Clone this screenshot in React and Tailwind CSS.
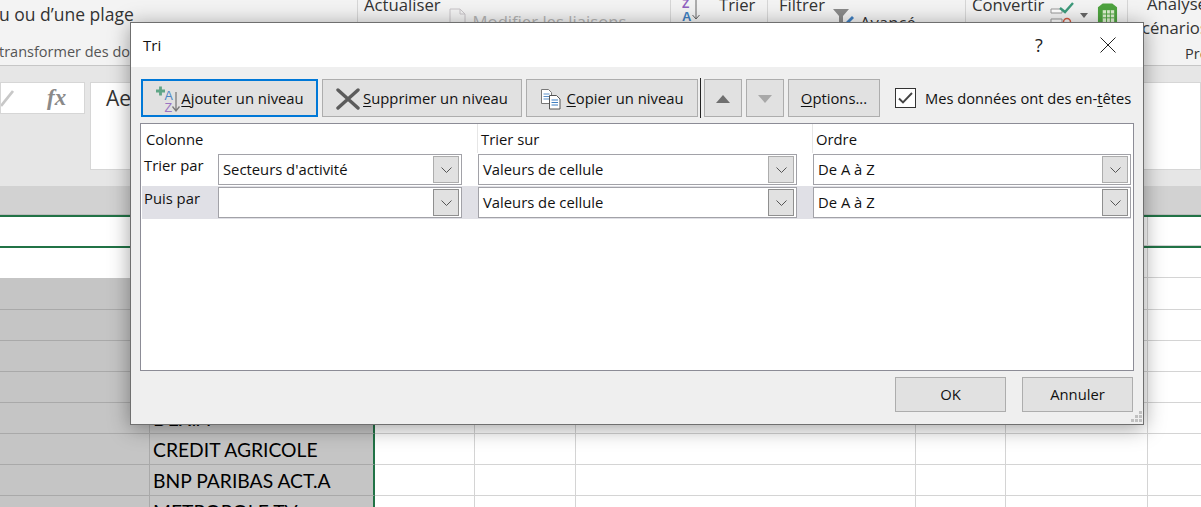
const rows = [
  { cls: "h-[31px] border-t-2 border-t-[#217346]", sel: false, text: "" },
  { cls: "h-[32px] border-t-2 border-t-[#217346]", sel: false, text: "" },
  { cls: "h-[32px]", sel: true, text: "" },
  { cls: "h-[31px]", sel: true, text: "" },
  { cls: "h-[31px]", sel: true, text: "" },
  { cls: "h-[31px]", sel: true, text: "" },
  { cls: "h-[31px]", sel: true, text: "DEXIA" },
  { cls: "h-[31px]", sel: true, text: "CREDIT AGRICOLE" },
  { cls: "h-[31px]", sel: true, text: "BNP PARIBAS ACT.A" },
  { cls: "h-[31px]", sel: true, text: "METROPOLE TV" },
];

function SheetRow({ row }) {
  const sel = row.sel ? "bg-[#c5c5c5] border-[#a9a9a9]" : "bg-white border-[#fff]";
  return (
    <div className={`flex ${row.cls} box-border`}>
      <div className={`w-[150px] shrink-0 border-r border-b ${sel}`} />
      <div className={`w-[225px] shrink-0 border-r-2 border-r-[#217346] border-b pl-[3px] text-[19.300px] leading-[32px] text-black font-['Lato',sans-serif] ${sel}`}>
        {row.text}
      </div>
      {[100, 101, 340, 90, 142].map((w, i) => (
        <div key={i} style={{ width: w }} className="shrink-0 bg-white border-r border-b border-[#d4d4d4]" />
      ))}
      <div className="flex-1 bg-white border-b border-[#d4d4d4]" />
    </div>
  );
}

function SortAddIcon() {
  return (
    <svg width="26" height="28" viewBox="0 0 26 28" className="shrink-0">
      <path d="M1 6h9M5.500 1.500v9" stroke="#5fa586" strokeWidth="2.800" />
      <text x="9.500" y="15" fontSize="12.500" fill="#4a86c5" fontFamily="Liberation Sans">A</text>
      <text x="9.500" y="27" fontSize="12.500" fill="#9a74c2" fontFamily="Liberation Sans">Z</text>
      <path d="M21 7v19M17.500 21.500l3.500 4.500 3.500-4.500" stroke="#7a7a7a" strokeWidth="1.300" fill="none" />
    </svg>
  );
}

function DeleteIcon() {
  return (
    <svg width="24" height="22" viewBox="0 0 24 22" className="shrink-0">
      <path d="M2 2l20 18M22 2L2 20" stroke="#5c5c5c" strokeWidth="3.400" strokeLinecap="round" />
    </svg>
  );
}

function CopyIcon() {
  return (
    <svg width="22" height="22" viewBox="0 0 22 22" className="shrink-0">
      <path d="M1.500 1.500h7l3 3v11h-10z" fill="#fff" stroke="#777" />
      <path d="M3.500 6h6M3.500 8.500h6M3.500 11h6" stroke="#5b8fc7" />
      <path d="M9.500 7.500h7l3.500 3.500v10h-10.500z" fill="#fff" stroke="#555" />
      <path d="M11.500 12h6.500M11.500 14.500h6.500M11.500 17h6.500" stroke="#3f7fc1" />
    </svg>
  );
}

function DialogButton({ className = "", children }) {
  return (
    <button className={`box-border flex items-center justify-center bg-[#e1e1e1] text-[14.800px] text-[#111] shrink-0 ${className}`}>
      {children}
    </button>
  );
}

function Chevron({ strong }) {
  return (
    <div className={`w-[26px] h-[27px] flex items-center justify-center bg-[#e1e1e1] border ${strong ? "border-[#8f8f8f]" : "border-[#adadad]"}`}>
      <svg width="11" height="6" viewBox="0 0 11 6">
        <path d="M0.500 0.500l5 5 5-5" stroke="#555" fill="none" />
      </svg>
    </div>
  );
}

function SelectBox({ className = "", value, strong }) {
  return (
    <div className={`h-[31px] box-border bg-white border border-[#a2a2a8] flex items-center justify-between pl-[4px] pr-[2px] text-[14.800px] text-[#111] ${className}`}>
      <span>{value}</span>
      <Chevron strong={strong} />
    </div>
  );
}

function LevelRow({ label, value, shaded }) {
  return (
    <div className={`flex h-[33px] items-center ${shaded ? "bg-[#e0e0e6]" : ""}`}>
      <div className="w-[76px] shrink-0 pl-[2px] pb-[8px] text-[14.800px] text-[#111]">{label}</div>
      <SelectBox className="w-[244px]" value={value} strong={shaded} />
      <div className="w-[16px] shrink-0" />
      <SelectBox className="w-[319px]" value="Valeurs de cellule" strong={shaded} />
      <div className="w-[16px] shrink-0" />
      <SelectBox className="w-[318px]" value="De A à Z" strong={shaded} />
    </div>
  );
}

function SortDialog() {
  const toolBtn = "h-[38px] pt-px border border-[#adadad]";
  const mark = "underline underline-offset-2";
  return (
    <div className="absolute left-[130px] top-[22px] w-[1014px] h-[403px] box-border flex flex-col bg-[#efefef] border border-[#6f6f6f] shadow-[0_3px_20px_rgba(0,0,0,0.38)] font-['Open_Sans',sans-serif]">
      {/* Title bar */}
      <div className="h-[44px] shrink-0 bg-white flex items-center pl-[12px]">
        <span className="text-[15px] text-[#111]">Tri</span>
        <span className="ml-auto w-[20px] text-[18px] text-center text-[#222]">?</span>
        <svg width="16" height="16" viewBox="0 0 16 16" className="ml-[51px] mr-[27px]">
          <path d="M0.500 0.500l15 15M15.500 0.500l-15 15" stroke="#222" />
        </svg>
      </div>

      {/* Toolbar */}
      <div className="flex items-start pl-[10px] pt-[12px] h-[56px] shrink-0">
        <DialogButton className="w-[177px] h-[38px] pt-px border-2 border-[#0078d7]">
          <SortAddIcon />
          <span><span className={mark}>A</span>jouter un niveau</span>
        </DialogButton>
        <DialogButton className={`w-[200px] ml-[4px] gap-[3px] ${toolBtn}`}>
          <DeleteIcon />
          <span><span className={mark}>S</span>upprimer un niveau</span>
        </DialogButton>
        <DialogButton className={`w-[172px] ml-[4px] gap-[4px] ${toolBtn}`}>
          <CopyIcon />
          <span><span className={mark}>C</span>opier un niveau</span>
        </DialogButton>
        <div className="w-px h-[40px] -mt-px bg-[#222] ml-[2px] mr-[3px] shrink-0" />
        <DialogButton className={`w-[38px] ${toolBtn}`}>
          <svg width="14" height="8" viewBox="0 0 14 8"><path d="M7 0l7 8H0z" fill="#6f6f6f" /></svg>
        </DialogButton>
        <DialogButton className={`w-[38px] ml-[4px] ${toolBtn}`}>
          <svg width="14" height="8" viewBox="0 0 14 8"><path d="M0 0h14L7 8z" fill="#a8a8a8" /></svg>
        </DialogButton>
        <DialogButton className={`w-[92px] ml-[4px] ${toolBtn}`}>
          <span><span className={mark}>O</span>ptions...</span>
        </DialogButton>
        <div className="w-[21px] h-[20px] box-border ml-[15px] mt-[9px] bg-white border border-[#333] flex items-center justify-center shrink-0">
          <svg width="15" height="12" viewBox="0 0 15 12"><path d="M1 6.500l4 4L14 1" stroke="#444" strokeWidth="1.900" fill="none" /></svg>
        </div>
        <span className="ml-[9px] mt-[8px] text-[14.700px] leading-[22px] text-[#111] whitespace-nowrap">
          Mes données ont des en-<span className={mark}>t</span>êtes
        </span>
      </div>

      {/* Levels table */}
      <div className="mx-[9px] h-[248px] box-border shrink-0 bg-white border border-[#8c8c96] pl-px pr-[2px]">
        <div className="flex h-[29px] text-[14.800px] text-[#111]">
          <div className="w-[335px] pl-[4px] leading-[30px]">Colonne</div>
          <div className="w-[335px] pl-[3px] leading-[30px] border-l border-[#e6e6e6]">Trier sur</div>
          <div className="flex-1 pl-[3px] leading-[30px] border-l border-[#e6e6e6]">Ordre</div>
        </div>
        <LevelRow label="Trier par" value="Secteurs d'activité" />
        <LevelRow label="Puis par" value="" shaded />
      </div>

      {/* Footer */}
      <div className="relative flex-1 flex items-start justify-end pt-[6px] pr-[10px] gap-[16px]">
        <DialogButton className="w-[111px] h-[35px] border border-[#adadad]">OK</DialogButton>
        <DialogButton className="w-[111px] h-[35px] border border-[#adadad]">Annuler</DialogButton>
        <svg width="12" height="12" viewBox="0 0 12 12" className="absolute right-px bottom-px">
          <path d="M9 0h3v3H9zM5 4h3v3H5zM9 4h3v3H9zM1 8h3v3H1zM5 8h3v3H5zM9 8h3v3H9z" fill="#c0c0c0" />
        </svg>
      </div>
    </div>
  );
}

function Ribbon() {
  return (
    <div className="flex h-[66px] overflow-hidden bg-[#f3f3f3] border-b border-[#c6c6c6] text-[16.700px] text-[#333] font-['Open_Sans',sans-serif] whitespace-nowrap">
      <div className="w-[358px] shrink-0 border-r border-[#d6d6d6] overflow-hidden">
        <div className="mt-[1px] -ml-[1px] text-[17.500px]">u ou d’une plage</div>
        <div className="mt-[14px] -ml-[1px] text-[14.500px] text-[#555]">transformer des données</div>
      </div>
      <div className="w-[313px] shrink-0 flex border-r border-[#d6d6d6] pl-[6px]">
        <div className="-mt-[8px] text-[#333]">Actualiser</div>
        <svg width="18" height="22" viewBox="0 0 18 22" className="ml-[8px] mt-[8px] shrink-0">
          <path d="M1 1h10l5 5v15H1z M11 1v5h5" fill="none" stroke="#c8c4c8" />
        </svg>
        <div className="ml-[6px] mt-[9px] text-[#b4b4b4]">Modifier les liaisons</div>
      </div>
      <div className="w-[97px] shrink-0 flex border-r border-[#d6d6d6] pl-[11px]">
        <svg width="24" height="24" viewBox="0 0 24 24" className="shrink-0">
          <text x="0" y="8" fontSize="12" fontWeight="bold" fill="#8e5fc0" fontFamily="Liberation Sans">Z</text>
          <text x="0" y="21" fontSize="13" fontWeight="bold" fill="#3f7fc1" fontFamily="Liberation Sans">A</text>
          <path d="M14 0v19M10.500 15l3.500 4 3.500-4" stroke="#666" fill="none" />
        </svg>
        <div className="ml-[13px] -mt-[8px]">Trier</div>
      </div>
      <div className="w-[198px] shrink-0 flex border-r border-[#d6d6d6] pl-[11px]">
        <div className="-mt-[8px]">Filtrer</div>
        <svg width="22" height="16" viewBox="0 0 22 16" className="ml-[8px] mt-[9px] shrink-0">
          <path d="M0 0h16l-6 7v9H6V7z" fill="#8a8a8a" />
          <path d="M12 14l7-7 2 2-7 7z" fill="#3f7fc1" />
        </svg>
        <div className="ml-[5px] mt-[10px]">Avancé</div>
      </div>
      <div className="w-[162px] shrink-0 flex border-r border-[#d6d6d6] pl-[6px]">
        <div className="-mt-[8px]">Convertir</div>
        <svg width="24" height="24" viewBox="0 0 24 24" className="ml-[6px] mt-[2px] shrink-0">
          <path d="M1 7h11v4H1zM1 17h11v4H1z" fill="#fff" stroke="#999" />
          <path d="M10 6l5 4 8-9" stroke="#3d9a7b" strokeWidth="2.400" fill="none" />
          <circle cx="17" cy="20" r="3.500" fill="none" stroke="#d2583f" strokeWidth="1.500" />
        </svg>
        <svg width="8" height="5" viewBox="0 0 8 5" className="ml-[6px] mt-[13px] shrink-0"><path d="M0 0h8L4 5z" fill="#666" /></svg>
        <svg width="21" height="24" viewBox="0 0 22 24" className="ml-[9px] mt-[2px] shrink-0">
          <path d="M1 5l5-4h10l5 4v19H1z" fill="#4ea33f" />
          <path d="M6 8h12v13H6z" fill="#dcefcf" />
          <path d="M10 8v13M14 8v13M6 12h12M6 16h12" stroke="#4ea33f" />
        </svg>
      </div>
      <div className="flex-1 min-w-0 overflow-hidden pl-[19px] leading-[20px]">
        <div className="-mt-[6px]">Analyse de</div>
        <div className="mt-[4px] -ml-[13px]">scénarios</div>
        <div className="mt-[6px] ml-[38px] text-[14.500px]">Prévision</div>
      </div>
    </div>
  );
}

function FormulaBar() {
  return (
    <div className="flex h-[120px] bg-[#e6e6e6] pt-[16px] pb-[16px] gap-[5px] font-['Open_Sans',sans-serif]">
      <div className="w-[85px] h-[32px] shrink-0 bg-white border border-[#d6d6d6] flex items-center">
        <svg width="14" height="18" viewBox="0 0 14 18" className="shrink-0"><path d="M0 17L12 2" stroke="#c8c8c8" strokeWidth="2.800" /></svg>
        <span className="ml-[32px] text-[23px] italic font-bold text-[#8a8a8a] font-['Liberation_Serif',serif]">fx</span>
      </div>
      <div className="flex-1 bg-white border border-[#d6d6d6] pl-[15px] text-[21px] text-[#333]">Ae</div>
    </div>
  );
}

export default function App() {
  return (
    <div className="relative w-[1201px] h-[507px] overflow-hidden bg-white">
      <Ribbon />
      <FormulaBar />
      <div className="h-[29px] bg-[#d2d2d2] border-b border-[#bdbdbd]" />
      {rows.map((row, i) => (
        <SheetRow key={i} row={row} />
      ))}
      <SortDialog />
    </div>
  );
}
